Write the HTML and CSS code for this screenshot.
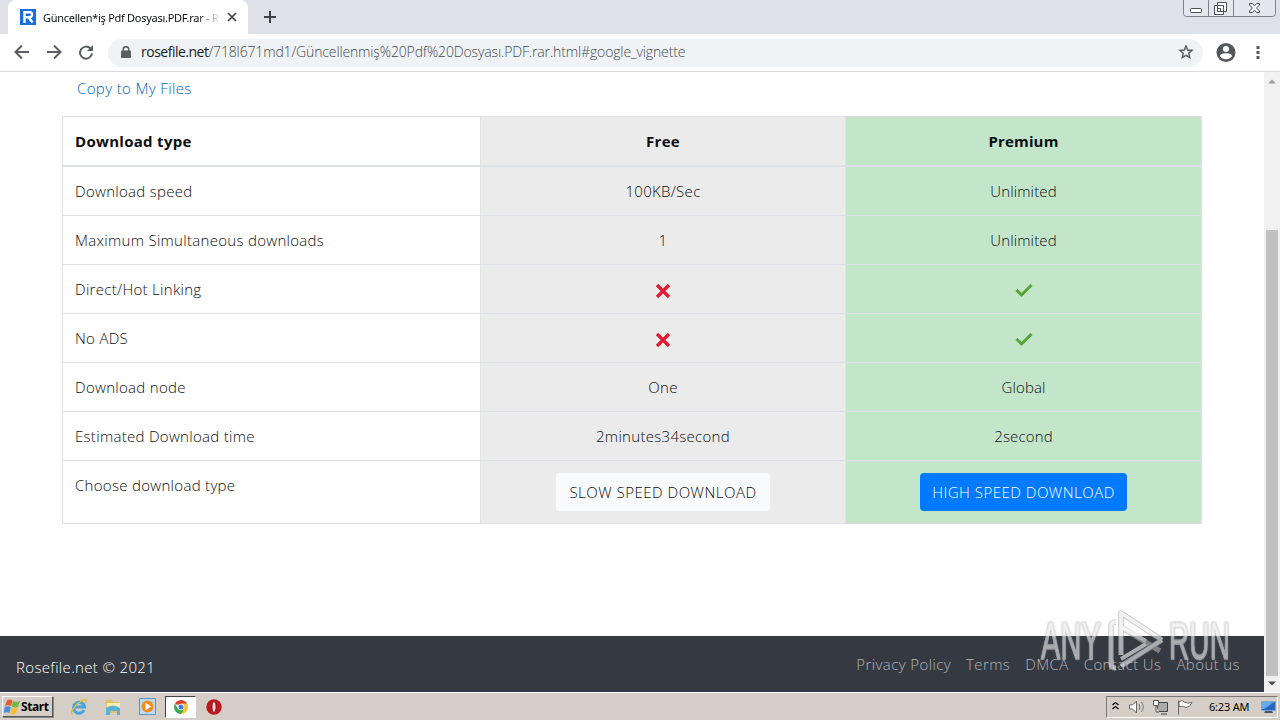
FILE: index.html
```html
<!DOCTYPE html>
<html lang="en">
<head>
    <meta charset="UTF-8">
    <meta name="viewport" content="width=device-width, initial-scale=1.0">
    <title>Rosefile.net</title>
    <link rel="stylesheet" href="styles.css">
</head>
<body>
    <!-- Tab strip -->
    <div class="tabs">
        <div class="tab">
            <svg class="favicon" width="16" height="16" viewBox="0 0 16 16"><path fill="#176fe0" d="M0 0h16v16H0z"/><path fill="none" stroke="#fff" stroke-width="2.4" d="M4.5 14V3.3H10q2 0 2 2.3T10 8.2H5M8.5 8.2l4 5.3"/></svg>
            <span class="tab-title">Güncellen*iş Pdf Dosyası.PDF.rar - R</span>
            <svg class="tab-close" width="10" height="10" viewBox="0 0 10 10"><path fill="none" stroke="#3c4043" stroke-width="1.6" d="M1 1l8 8M9 1L1 9"/></svg>
        </div>
        <svg class="new-tab" width="12" height="12" viewBox="0 0 12 12"><path fill="none" stroke="#3c4043" stroke-width="2" d="M6 0v12M0 6h12"/></svg>
        <svg class="window-buttons" width="93" height="17" viewBox="0 0 93 17">
            <path fill="#e4e7ed" stroke="#7d828c" d="M.5-1v14.500q0 3 3 3h86q3 0 3-3V-1M25.500 0v16M50.500 0v16"/>
            <rect x="7.500" y="8.500" width="11" height="4" rx="1" fill="#fff" stroke="#4b515b"/>
            <path fill="#fff" stroke="#4b515b" d="M34.500 2.500h9v9h-9zM31.500 5.500h9v9h-9zM34.500 8.500h3v3h-3z"/>
            <path fill="#fff" stroke="#4b515b" d="M66.500 3.500h3l2 2.500 2-2.500h3v1.500l-3 3 3 3v1.500h-3l-2-2.500-2 2.500h-3V11l3-3-3-3z"/>
        </svg>
    </div>

    <!-- Address bar -->
    <div class="toolbar">
        <svg class="nav-icons" width="80" height="16" viewBox="0 0 80 16">
            <path fill="none" stroke="#5a5d61" stroke-width="2" d="M15 7H2M8 .5L1.500 7 8 13.500M33 7h13M40 .5L46.500 7 40 13.500"/>
            <path fill="none" stroke="#5a5d61" stroke-width="2" d="M76.500 3.600A6 6 0 1 0 78 8.300"/>
            <path fill="#5a5d61" d="M79 0v6h-6z"/>
        </svg>
        <div class="address">
            <svg width="10" height="13" viewBox="0 0 10 13"><path fill="#5a5d61" d="M1 4.500h8q1 0 1 1V11q0 1-1 1H1q-1 0-1-1V5.500q0-1 1-1z"/><path fill="none" stroke="#5a5d61" stroke-width="1.500" d="M2.300 5V3.200a2.700 2.500 0 0 1 5.400 0V5"/></svg>
            <span class="url"><b>rosefile.net</b>/718l671md1/Güncellenmiş%20Pdf%20Dosyası.PDF.rar.html#google_vignette</span>
            <svg class="star" width="16" height="16" viewBox="0 0 16 16"><path fill="none" stroke="#5a5d61" stroke-width="1.500" d="M8 1l1.700 4 4.300.4-3.200 2.900.9 4.300L8 10.400l-3.700 2.200.9-4.300L2 5.400 6.300 5z"/></svg>
        </div>
        <svg class="profile" width="20" height="20" viewBox="0 0 20 20"><circle cx="10" cy="9.500" r="9.500" fill="#54585d"/><circle cx="10" cy="6" r="3" fill="#fff"/><path fill="#fff" d="M4 13.200q0-3 6-3t6 3q-2 3-6 3t-6-3z"/></svg>
        <svg class="dots" width="4" height="14" viewBox="0 0 4 14"><path fill="#54585d" d="M.5 0h3v3h-3zM.5 5h3v3h-3zM.5 10h3v3h-3z"/></svg>
    </div>

    <div class="viewport">
        <div class="page">
            <div class="content">
                <a class="copy-link" href="#">Copy to My Files</a>
                <table class="compare">
                    <thead>
                        <tr><th class="feature">Download type</th><th class="free">Free</th><th class="premium">Premium</th></tr>
                    </thead>
                    <tbody>
                        <tr><td>Download speed</td><td class="free">100KB/Sec</td><td class="premium">Unlimited</td></tr>
                        <tr><td>Maximum Simultaneous downloads</td><td class="free">1</td><td class="premium">Unlimited</td></tr>
                        <tr>
                            <td>Direct/Hot Linking</td>
                            <td class="free"><svg class="mark" width="16" height="16" viewBox="0 0 16 16"><path fill="none" stroke="#e01b30" stroke-width="3.200" d="M2 2l12 12M14 2L2 14"/></svg></td>
                            <td class="premium"><svg class="mark" width="18" height="16" viewBox="0 0 18 16"><path fill="none" stroke="#52a535" stroke-width="3" d="M1.500 7l5 5L16.500 2"/></svg></td>
                        </tr>
                        <tr>
                            <td>No ADS</td>
                            <td class="free"><svg class="mark" width="16" height="16" viewBox="0 0 16 16"><path fill="none" stroke="#e01b30" stroke-width="3.200" d="M2 2l12 12M14 2L2 14"/></svg></td>
                            <td class="premium"><svg class="mark" width="18" height="16" viewBox="0 0 18 16"><path fill="none" stroke="#52a535" stroke-width="3" d="M1.500 7l5 5L16.500 2"/></svg></td>
                        </tr>
                        <tr><td>Download node</td><td class="free">One</td><td class="premium">Global</td></tr>
                        <tr><td>Estimated Download time</td><td class="free">2minutes34second</td><td class="premium">2second</td></tr>
                        <tr><td>Choose download type</td><td class="free"><button class="btn btn-light">SLOW SPEED DOWNLOAD</button></td><td class="premium"><button class="btn btn-primary">HIGH SPEED DOWNLOAD</button></td></tr>
                    </tbody>
                </table>
            </div>
            <footer class="footer">
                <span class="copyright">Rosefile.net © 2021</span>
                <nav class="links">
                    <a href="#">Privacy Policy</a>
                    <a href="#">Terms</a>
                    <a href="#">DMCA</a>
                    <a href="#">Contact Us</a>
                    <a href="#">About us</a>
                </nav>
            </footer>
        </div>
        <div class="scrollbar">
            <svg width="8" height="5" viewBox="0 0 8 5"><path fill="#a0a0a0" d="M0 4.500L4 .5l4 4z"/></svg>
            <div class="thumb"></div>
            <svg width="8" height="5" viewBox="0 0 8 5"><path fill="#505050" d="M0 .5h8l-4 4z"/></svg>
        </div>
    </div>

    <!-- Taskbar -->
    <div class="taskbar">
        <div class="start">
            <svg width="16" height="16" viewBox="0 0 16 16"><path fill="#e8592b" d="M3 1.500q3-2 5.500 0L7 7Q4 5.500 1 7z"/><path fill="#72b844" d="M9 2q3 1.500 7 0L14 8Q11 9 7.600 7.500z"/><path fill="#4a8fdc" d="M.8 8q3-1.500 6 0l-1.400 6Q3 12.500-.5 14z"/><path fill="#f6bd30" d="M7.500 8.500q3 1.500 6.200.3L12 15q-2.800 1.200-6-.5z"/></svg>
            <span>Start</span>
        </div>
        <svg class="quick ie" width="18" height="18" viewBox="0 0 18 18"><path fill="none" stroke="#42a5e0" stroke-width="3" d="M14 12.200A5.500 5.500 0 1 1 14.500 9H4"/><path fill="none" stroke="#e9b93b" stroke-width="1.400" d="M2.500 16Q-.5 15 5 8.500 12 1 15.500 1.500q2 1-.5 4"/></svg>
        <svg class="quick folder" width="18" height="18" viewBox="0 0 18 18"><path fill="#e5c261" d="M2 2h6l1 2h6v11H2z"/><path fill="#faedae" d="M3 5h13v6H3z"/><path fill="#57b2d9" d="M2 10q7-5 14 0v7h-3v-4H6v4H2z"/></svg>
        <svg class="quick media" width="17" height="17" viewBox="0 0 17 17"><path fill="#b6dcf7" stroke="#5d93bd" d="M.5.500h16v16H.5z"/><circle cx="8.500" cy="8.500" r="6" fill="#f58a16"/><path fill="#fff" d="M6.500 4.800l6 3.700-6 3.700z"/></svg>
        <div class="running">
            <svg width="14" height="14" viewBox="0 0 14 14"><path fill="#df3e30" d="M7 7L1 3.500A7 7 0 0 1 13.100 3.500z"/><path fill="#f5c430" d="M7 7h0V3.500h6.100A7 7 0 0 1 7 14z"/><path fill="#39a852" d="M7 14A7 7 0 0 1 1 3.500L4 9l6 0z"/><circle cx="7" cy="7" r="3.300" fill="#fff"/><circle cx="7" cy="7" r="2.500" fill="#3c7be0"/></svg>
        </div>
        <svg class="quick opera" width="16" height="16" viewBox="0 0 16 16"><circle cx="8" cy="8" r="7.700" fill="#bd1720"/><ellipse cx="8" cy="8" rx="2" ry="5.500" fill="#f4dddd" stroke="#7c0b10" stroke-width=".8"/></svg>
        <div class="tray">
            <svg width="110" height="18" viewBox="0 0 110 18">
                <path fill="none" stroke="#000" stroke-width="1.300" d="M5.500 7L8.500 4.500l3 2.500M5.500 11l3-2.500 3 2.500"/>
                <path fill="#fff" stroke="#666" d="M22.500 7h3l4-4v12l-4-4h-3z"/>
                <path fill="none" stroke="#777" d="M32 6q2 3 0 6M34.500 4q3.500 5 0 10"/>
                <path fill="#aaa" stroke="#444" d="M50.500 4.500h10v9h-10zM54 16h6"/>
                <path fill="#fff" stroke="#555" d="M46.500 2.500h5v5h-5zM49 8v6h3"/>
                <path fill="#fff" stroke="#666" d="M71.500 2.500v14M72 3.500q4-2 6 1 3 1 7 0-2 5-6 5-2-2-7-1z"/>
            </svg>
            <span class="clock">6:23 AM</span>
            <svg width="17" height="14" viewBox="0 0 17 14"><path fill="#2567bd" stroke="#7ba5d8" d="M1.500 1.500h14v9h-14z"/><path fill="#65a9ef" d="M2 2h12L4 9H2z"/><path fill="#465870" d="M5 11h7l1 2H4z"/></svg>
        </div>
    </div>

    <svg class="watermark" width="210" height="70" viewBox="0 0 210 70">
        <g class="watermark-text">
            <text x="3" y="54" textLength="60" lengthAdjust="spacingAndGlyphs">ANY</text>
            <text x="131" y="54" textLength="61" lengthAdjust="spacingAndGlyphs">RUN</text>
        </g>
        <g fill="none" stroke-linejoin="round">
            <path stroke="#a8a8a8" stroke-width="5.500" d="M78 17q-5 0-5 4v38q0 4 5 4M83 50V8l41 27M83 22l39 24M83 61l41-26M83 72"/>
            <path stroke="#ececec" stroke-width="3.800" d="M78 17q-5 0-5 4v38q0 4 5 4M83 50V8l41 27M83 22l25 14M83 61l41-26M83 54l25-15"/>
        </g>
    </svg>
</body>
</html>
```
FILE: styles.css
```css
* {
    box-sizing: border-box;
}
body {
    margin: 0;
    width: 1280px;
    height: 720px;
    overflow: hidden;
    display: flex;
    flex-direction: column;
    position: relative;
    font-family: "Open Sans", "Noto Sans", sans-serif;
    font-size: 15px;
    font-weight: 300;
    letter-spacing: 0.3px;
    color: #0c0e10;
    background-color: #fff;
}
svg {
    display: block;
    flex-shrink: 0;
}
a {
    text-decoration: none;
}

/* browser */
.tabs {
    height: 34px;
    display: flex;
    align-items: flex-start;
    background-color: #dee1e8;
}
.tab {
    display: flex;
    align-items: center;
    width: 240px;
    height: 34px;
    margin-left: 8px;
    padding: 0 11px 0 12px;
    background-color: #fff;
    border-radius: 8px 8px 0 0;
}
.tab-title {
    width: 175px;
    margin-left: 7px;
    overflow: hidden;
    white-space: nowrap;
    font-family: "Noto Sans", sans-serif;
    font-size: 11px;
    font-weight: 400;
    letter-spacing: -0.28px;
    -webkit-mask-image: linear-gradient(90deg, #000 155px, transparent 178px);
}
.tab-close {
    margin-left: 9px;
}
.new-tab {
    margin: 11px 0 0 16px;
}
.window-buttons {
    margin-left: auto;
    margin-right: 4px;
}
.toolbar {
    height: 38px;
    display: flex;
    align-items: center;
    padding-left: 14px;
    border-bottom: 1px solid #d8d9db;
}
.address {
    display: flex;
    align-items: center;
    width: 1095px;
    height: 28px;
    margin-left: 14px;
    padding: 0 9px 0 13px;
    border-radius: 14px;
    background-color: #f0f3f5;
}
.url {
    margin: -2px 0 0 10px;
    font-size: 14px;
    letter-spacing: -0.14px;
    color: #45494d;
    white-space: nowrap;
}
.url b {
    font-weight: 400;
    letter-spacing: -0.5px;
    color: #17191c;
}
.star {
    margin-left: auto;
}
.profile {
    margin-left: 13px;
}
.dots {
    margin-left: 20px;
}

/* page */
.viewport {
    height: 620px;
    display: flex;
}
.page {
    width: 1264px;
    display: flex;
    flex-direction: column;
}
.content {
    height: 564px;
    padding: 4px 62px 0;
}
.copy-link {
    display: block;
    height: 40px;
    padding-left: 15px;
    line-height: 24px;
    letter-spacing: 0.37px;
    color: #0062c4;
}
.compare {
    width: 1139px;
    table-layout: fixed;
    border-collapse: collapse;
    line-height: 24px;
}
.compare th,
.compare td {
    padding: 12px;
    height: 49px;
    border: 1px solid #dee2e6;
    text-align: left;
    vertical-align: top;
}
.compare th {
    border-bottom-width: 2px;
    font-weight: 700;
    font-size: 15px;
}
.compare .feature {
    width: 418px;
}
.compare .free {
    width: 365px;
    background-color: #ebebeb;
    text-align: center;
}
.compare .premium {
    width: 356px;
    background-color: #c3e6cb;
    text-align: center;
    letter-spacing: 0.15px;
}
.mark {
    margin: 6px auto 2px;
}
.btn {
    display: block;
    height: 38px;
    margin: 0 auto;
    padding: 0;
    border: 0;
    border-radius: 4px;
    font: inherit;
    letter-spacing: 0.5px;
    white-space: nowrap;
}
.btn-light {
    width: 214px;
    background-color: #f8fafc;
    color: #0c0e10;
}
.btn-primary {
    width: 207px;
    background-color: #007bff;
    color: #fff;
}
.footer {
    height: 56px;
    display: flex;
    justify-content: space-between;
    padding: 0 24px 0 16px;
    background-color: #353942;
    color: #fff;
}
.copyright {
    line-height: 62px;
    letter-spacing: 0.34px;
}
.links {
    display: flex;
    gap: 15px;
    line-height: 56px;
    letter-spacing: 0.4px;
}
.links a {
    color: #b2b5ba;
}
.scrollbar {
    width: 16px;
    display: flex;
    flex-direction: column;
    align-items: center;
    padding: 7px 0 6px;
    background-color: #f1f1f1;
}
.thumb {
    width: 12px;
    height: 446px;
    margin: 146px 0 5px;
    background-color: #c1c1c1;
}

/* taskbar */
.taskbar {
    height: 28px;
    display: flex;
    align-items: center;
    padding: 0 2px;
    border-top: 1px solid #fff;
    background-color: #d5cec6;
}
.start {
    width: 51px;
    height: 21px;
    display: flex;
    align-items: center;
    gap: 1px;
    border: 1px solid;
    border-color: #fff #555 #555 #fff;
    box-shadow: 1px 1px 0 #888;
    padding-left: 1px;
    font: 700 12px "Noto Sans", sans-serif;
    letter-spacing: -0.4px;
    color: #000;
}
.ie {
    margin-left: 17px;
}
.folder {
    margin-left: 16px;
}
.media {
    margin-left: 17px;
}
.running {
    display: flex;
    align-items: center;
    justify-content: center;
    width: 31px;
    height: 22px;
    margin-left: 9px;
    background-color: #fff;
    border: 1px solid;
    border-color: #444 #fff #fff #444;
}
.opera {
    margin-left: 10px;
}
.tray {
    display: flex;
    align-items: center;
    width: 172px;
    height: 22px;
    margin-left: auto;
    border: 1px solid;
    border-color: #777 #fff #fff #777;
}
.clock {
    width: 42px;
    margin: 0 10px 0 -8px;
    font: 400 11px "Noto Sans", sans-serif;
    letter-spacing: -0.2px;
    white-space: nowrap;
    color: #000;
}

.watermark {
    position: absolute;
    left: 1038px;
    top: 605px;
    opacity: 0.65;
    pointer-events: none;
}
.watermark-text {
    font-family: "Liberation Sans Narrow", "Liberation Sans", sans-serif;
    font-size: 52px;
    fill: #ececec;
    stroke: #dcdcdc;
    stroke-width: 1.4px;
    filter: drop-shadow(0 0 1px #777);
}
```
